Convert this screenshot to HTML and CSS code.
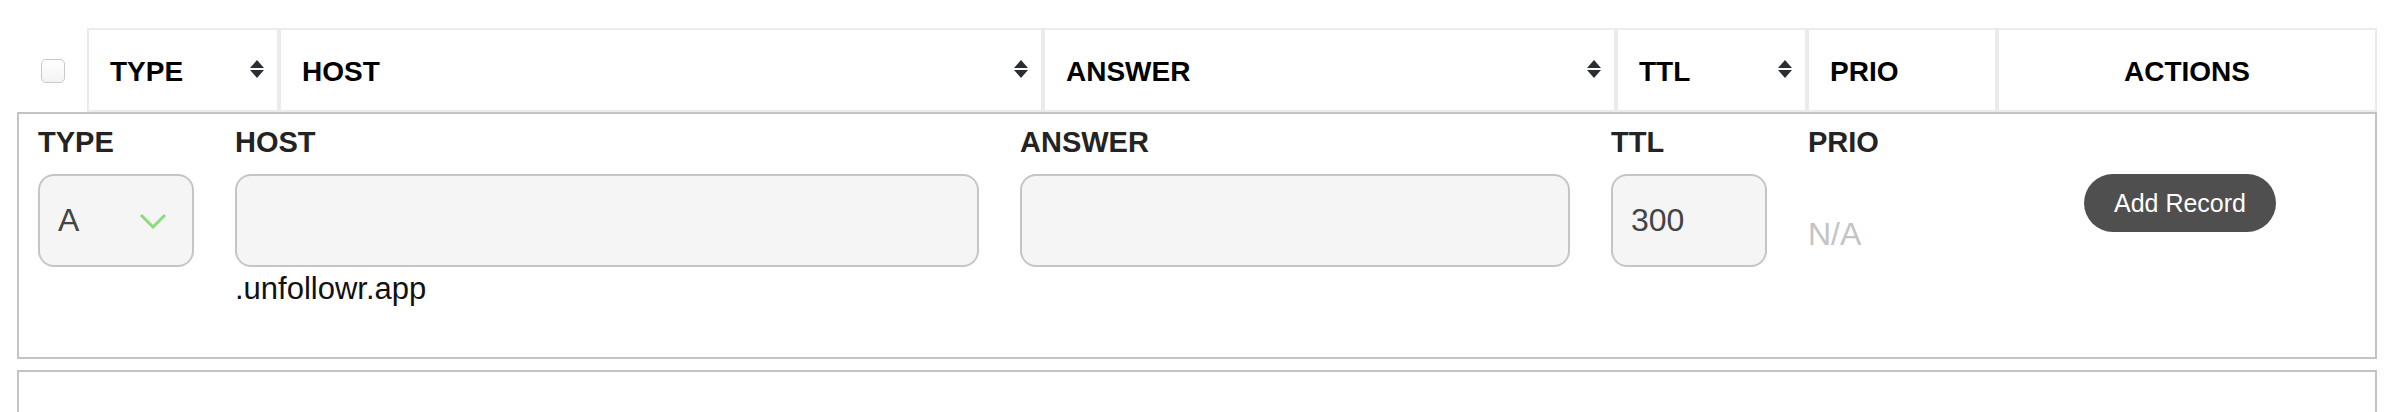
FILE: index.html
```html
<!DOCTYPE html>
<html lang="en">
<head>
<meta charset="utf-8">
<title>DNS Records</title>
<link rel="stylesheet" href="styles.css">
</head>
<body>
<div class="page">
  <div class="head-row">
    <div class="hcell col-check"><span class="checkbox"></span></div>
    <div class="hcell bordered sortable col-type"><span class="htext">TYPE</span><svg class="sort" viewBox="0 0 16 20" width="16" height="20"><path d="M8 1 L15 9 L1 9 Z M1 11 L15 11 L8 19 Z" fill="#2a2e33"/></svg></div>
    <div class="hcell bordered sortable col-host"><span class="htext">HOST</span><svg class="sort" viewBox="0 0 16 20" width="16" height="20"><path d="M8 1 L15 9 L1 9 Z M1 11 L15 11 L8 19 Z" fill="#2a2e33"/></svg></div>
    <div class="hcell bordered sortable col-answer"><span class="htext">ANSWER</span><svg class="sort" viewBox="0 0 16 20" width="16" height="20"><path d="M8 1 L15 9 L1 9 Z M1 11 L15 11 L8 19 Z" fill="#2a2e33"/></svg></div>
    <div class="hcell bordered sortable col-ttl"><span class="htext">TTL</span><svg class="sort" viewBox="0 0 16 20" width="16" height="20"><path d="M8 1 L15 9 L1 9 Z M1 11 L15 11 L8 19 Z" fill="#2a2e33"/></svg></div>
    <div class="hcell bordered col-prio"><span class="htext">PRIO</span></div>
    <div class="hcell bordered col-actions"><span class="htext">ACTIONS</span></div>
  </div>

  <div class="add-form">
    <div class="field f-type">
      <div class="label">TYPE</div>
      <div class="control select"><span>A</span><svg class="chev" viewBox="0 0 28 16" width="28" height="16"><polyline points="2,2 14,14 26,2" fill="none" stroke="#8dda7f" stroke-width="3"/></svg></div>
    </div>
    <div class="field f-host">
      <div class="label">HOST</div>
      <div class="control"></div>
      <div class="suffix">.unfollowr.app</div>
    </div>
    <div class="field f-answer">
      <div class="label">ANSWER</div>
      <div class="control"></div>
    </div>
    <div class="field f-ttl">
      <div class="label">TTL</div>
      <div class="control"><span>300</span></div>
    </div>
    <div class="field f-prio">
      <div class="label">PRIO</div>
      <div class="na">N/A</div>
    </div>
    <div class="field f-action">
      <button class="add-btn">Add Record</button>
    </div>
  </div>

  <div class="records-box"></div>
</div>
</body>
</html>
```

FILE: styles.css
```css
* { box-sizing: border-box; }
html, body { margin: 0; padding: 0; background: #fff; }
body { font-family: "Liberation Sans", Arial, sans-serif; color: #222; overflow: hidden; }

.page { padding: 28px 15px 0 17px; width: 2392px; }

.head-row { display: flex; height: 84px; }
.hcell { display: flex; align-items: center; height: 84px; font-weight: 700; font-size: 28px; color: #000; padding: 0 12px 0 21px; border: 2px solid transparent; }
.hcell.bordered { border-color: #ebebeb; }
.htext { flex: 1; padding-top: 3px; }
.sortable .sort { flex: none; margin-top: -2px; }
.col-check { width: 70px; padding-left: 24px; border: none; }
.col-type { width: 192px; }
.col-host { width: 764px; }
.col-answer { width: 573px; }
.col-ttl { width: 191px; }
.col-prio { width: 190px; }
.col-actions { width: 380px; padding: 0; }
.col-actions .htext { text-align: center; }

.checkbox { display: block; flex: none; width: 24px; height: 24px; margin-top: 2px; border: 1px solid #c9c9c9; border-radius: 5px; background: linear-gradient(#fff, #f4f4f4); }

.add-form { display: flex; gap: 41px; border: 2px solid #c3c3c3; height: 247px; padding: 11px 19px 0 19px; }
.field { display: flex; flex-direction: column; }
.label { font-weight: 700; font-size: 29px; line-height: 34px; color: #232323; margin-bottom: 15px; }
.control { height: 93px; border: 2px solid #c5c5c5; border-radius: 16px; background: #f5f5f5; display: flex; align-items: center; padding: 0 18px; font-size: 32px; color: #444; }
.select { justify-content: space-between; padding-right: 25px; }
.f-type { width: 156px; }
.f-host { width: 744px; }
.f-answer { width: 550px; }
.f-ttl { width: 156px; }
.f-prio { width: 235px; }
.suffix { font-size: 31px; line-height: 34px; margin-top: 5px; color: #111; }
.na { font-size: 32px; line-height: 36px; color: #c4c4c4; margin-top: 42px; }
.f-action { padding-top: 49px; }
.add-btn { width: 192px; height: 58px; border: none; border-radius: 29px; background: #4f4f4f; color: #fff; font-family: "Liberation Sans", Arial, sans-serif; font-size: 25px; padding: 0; }

.records-box { margin-top: 11px; height: 60px; border: 2px solid #c3c3c3; }
```
